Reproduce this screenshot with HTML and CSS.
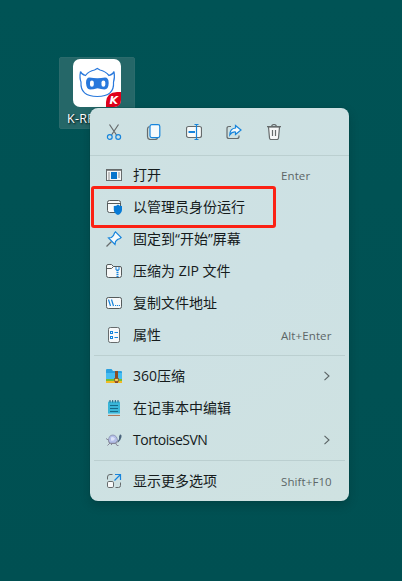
FILE: index.html
```html
<!DOCTYPE html>
<html lang="zh-CN">
<head>
<meta charset="utf-8">
<title>Desktop</title>
<link rel="stylesheet" href="styles.css">
</head>
<body>
<main class="desktop">
  <div class="shortcut">
    <svg class="app-icon" width="48" height="48" viewBox="0 0 48 48">
      <rect width="48" height="48" rx="7" fill="#fff"/>
      <path d="M12.500 16.500Q8.500 15.500 7.500 12.500Q6.300 19 8 23Q7 37.500 24.300 37.500T40.500 23Q42 19 41 12.500Q40 15.500 36 16.500Q32 12 27 11L24.300 9.500L21.500 11Q16 12 12.500 16.500Z" fill="#fff" stroke="#2878dc" stroke-width="1.200"/>
      <path d="M16.500 18.500Q24.500 20 32 18.500Q35.700 18.500 35.700 24Q35.500 30.500 31.500 30.500Q28 30 24.500 29.200Q20 30.500 17 30.500Q13.500 30.500 13 24Q13 18.500 16.500 18.500Z" fill="#2878dc"/>
      <rect x="17" y="21.500" width="3.800" height="6.200" rx="1.900" fill="#fff"/>
      <rect x="28.500" y="21.500" width="3.800" height="6.200" rx="1.900" fill="#fff"/>
      <path d="M48 33V41Q48 48 41 48H33V43Q34 33 44 33Z" fill="#e0001b"/>
      <text class="badge" x="36.500" y="45">K</text>
    </svg>
    <span class="shortcut-label">K-RPA</span>
  </div>

  <div class="menu">
    <div class="toolbar">
      <svg class="tool" viewBox="0 0 16 16"><path d="M3.500 .5L10.500 11M12.500 .5L5.500 11" stroke="#666b6c" stroke-width="1.200"/><circle cx="3.800" cy="13" r="2.400" stroke="#1684dc" stroke-width="1.200"/><circle cx="12.200" cy="13" r="2.400" stroke="#1684dc" stroke-width="1.200"/></svg>
      <svg class="tool" viewBox="0 0 16 16"><path d="M3.500 2.500Q1.500 3 1.500 5V12.500Q1.500 15.500 4.500 15.500H9Q11 15.500 11.500 14" stroke="#666b6c" stroke-width="1.200"/><rect x="4" y=".6" width="9.800" height="13" rx="1.800" fill="#f5fafc" stroke="#1684dc" stroke-width="1.200"/></svg>
      <svg class="tool" viewBox="0 0 16 16"><rect x=".5" y="2.500" width="15" height="11" rx="2" fill="#f7fafa" stroke="#666b6c" stroke-width="1.200"/><path d="M10.500 1V15M8.500 .5H12.500M8.500 15.500H12.500" stroke="#1684dc" stroke-width="1.200"/><path d="M2.500 8H9" stroke="#1684dc" stroke-width="2"/></svg>
      <svg class="tool" viewBox="0 0 16 16"><path d="M5 2.500H3Q1 2.500 1 4.500V12.500Q1 14.500 3 14.500H11Q13 14.500 13 12.500V11.500" stroke="#666b6c" stroke-width="1.200"/><path d="M9.500 1.500L15 6L9.500 10.500V8Q6 7.500 3.800 10.800Q4 4.500 9.500 4Z" fill="#f5fafc" stroke="#1684dc" stroke-width="1.200"/></svg>
      <svg class="tool" viewBox="0 0 16 16"><path d="M2.500 3L3.500 14Q3.700 15.500 5 15.500H11Q12.300 15.500 12.500 14L13.500 3Z" fill="#f7f8f8" stroke="#666b6c" stroke-width="1.200"/><path d="M1 2.700H15M5.500 2.500Q6 .5 8 .5T10.500 2.500M6.500 6V12M9.500 6V12" stroke="#666b6c" stroke-width="1.200"/></svg>
    </div>
    <div class="row">
      <svg class="icon" viewBox="0 0 16 16"><rect x=".5" y="2.500" width="15" height="11" fill="#f5f7f7" stroke="#666b6c"/><path d="M1 3.500H15" stroke="#888"/><rect x="5" y="5" width="6" height="7" fill="#0875cc"/><path d="M2 6H4M2 8H4M2 10H4M2 12H4M12 6H14M12 8H14M12 10H14" stroke="#777" stroke-width=".8"/></svg>
      <span class="label">打开</span><span class="key">Enter</span>
    </div>
    <div class="row">
      <svg class="icon" viewBox="0 0 16 16"><rect x="1.500" y="1.500" width="13" height="12" rx="2" fill="#f8fafa" stroke="#555b5c"/><path d="M1.500 4.500H14.500" stroke="#555b5c"/><path d="M12 5.500Q13.500 7 16 7V11Q15.500 14.500 12 16Q8.300 14.500 7.800 11V7Q10.500 7 12 5.500Z" fill="#087bd6"/></svg>
      <span class="label">以管理员身份运行</span>
    </div>
    <div class="row">
      <svg class="icon" viewBox="0 0 16 16"><path d="M5.500 10.500L.5 15.500" stroke="#666b6c" stroke-width="1.200"/><path d="M9.500 .8L15.200 6.500L14 7.500L11.500 8.500L9.500 10.500L9 13.500L2.500 7L5.500 6.500L7.500 4.500L8.500 2Z" fill="#f5fafc" stroke="#1684dc" stroke-width="1.200"/></svg>
      <span class="label">固定到“开始”屏幕</span>
    </div>
    <div class="row">
      <svg class="icon" viewBox="0 0 16 16"><path d="M.5 12.500V3Q.5 1.500 2 1.500H5.500L7.500 3.500H14Q15.500 3.500 15.500 5V12.500Q15.500 14.500 13.500 14.500H2.500Q.5 14.500 .5 12.500Z" fill="#f7f8f8" stroke="#555b5c"/><path d="M.5 5.500H5.500L7.500 3.500" stroke="#555b5c"/><path d="M11.500 7V14" stroke="#1684dc" stroke-width="2" stroke-dasharray="1.300 .7"/><path d="M10 4V7H13V4" stroke="#1684dc"/></svg>
      <span class="label">压缩为 ZIP 文件</span>
    </div>
    <div class="row">
      <svg class="icon" viewBox="0 0 16 16"><rect x=".5" y="2.500" width="15" height="11" rx="1.800" fill="#f7f9fa" stroke="#555b5c"/><path d="M2.500 4.500L4.500 11M5.500 4.500L7.500 11M9 10.500H10.200M11 10.500H12.200M13 10.500H14" stroke="#1684dc" stroke-width="1.200"/></svg>
      <span class="label">复制文件地址</span>
    </div>
    <div class="row">
      <svg class="icon" viewBox="0 0 16 16"><rect x="2.500" y=".5" width="11" height="15" rx="1.800" fill="#f7f9fa" stroke="#666b6c"/><rect x="4.500" y="4.500" width="2" height="2" stroke="#1684dc"/><rect x="4.500" y="9.500" width="2" height="2" stroke="#1684dc"/><path d="M8.500 5.500H12M8.500 10.500H12" stroke="#1684dc"/></svg>
      <span class="label">属性</span><span class="key">Alt+Enter</span>
    </div>
    <div class="separator"></div>
    <div class="row">
      <svg class="icon" viewBox="0 0 16 16"><path d="M0 2Q0 1 1 1H5.500L7 3H15Q16 3 16 4V12H0Z" fill="#2aa0e0"/><path d="M0 5H16V12H0Z" fill="#45bdf2"/><path d="M0 11H16V13H0Z" fill="#75bd35"/><path d="M0 13H16V15H0Z" fill="#f4bb24"/><path d="M9 3H12V15H9Z" fill="#8c4b24"/><rect x="8.700" y="10.500" width="3.600" height="2.800" fill="#f8dc68" stroke="#8c4b24" stroke-width=".8"/></svg>
      <span class="label">360压缩</span>
      <svg class="chevron" viewBox="0 0 8 10"><path d="M1.500 .8L6 5L1.500 9.200"/></svg>
    </div>
    <div class="row">
      <svg class="icon" viewBox="0 0 16 16"><rect x="2" y="1.500" width="12" height="13.500" rx="1" fill="#39b5d8"/><path d="M2 15.300H14" stroke="#a85e36"/><path d="M2 14.200H14" stroke="#e7f4f7"/><path d="M4 0V2.500M6.700 0V2.500M9.300 0V2.500M12 0V2.500" stroke="#155b79"/><path d="M4 5.500H12M4 8.500H12M4 11.500H12" stroke="#176987"/></svg>
      <span class="label">在记事本中编辑</span>
    </div>
    <div class="row">
      <svg class="icon" viewBox="0 0 16 16"><path d="M2.500 9Q2.500 3 7 3Q11 3.500 11.500 8.500L9 11.200H4.500Z" fill="#b4bfe8" stroke="#858bab" stroke-width=".8"/><path d="M11.500 9Q13.500 8 13 4.500L14 2.500Q16 2 15.500 5Q14.500 9 12 10.500Z" fill="#4a647c"/><path d="M0 6.500L3 8.500M2 9.500L4.500 11.500H9.500L12 9.500M4 11L1.500 13.500M9.500 11L11 13.500H12.500M5.500 11.500V13" stroke="#858699"/><path d="M5 5.500Q7 4 9 6.500Q8 9.500 5 8.500Z" fill="#dce2f8"/></svg>
      <span class="label latin">TortoiseSVN</span>
      <svg class="chevron" viewBox="0 0 8 10"><path d="M1.500 .8L6 5L1.500 9.200"/></svg>
    </div>
    <div class="separator"></div>
    <div class="row">
      <svg class="icon" viewBox="0 0 16 16"><path d="M6.500 1.500H4Q1.500 1.500 1.500 4V6.500M14.500 9.500V12.500Q14.500 14.500 12.500 14.500H9.500" stroke="#666b6c"/><rect x="1.500" y="8.500" width="6" height="6" rx="1.300" fill="#f8fafa" stroke="#666b6c"/><path d="M8.500 7.500L14.500 1.500M9 1.500H14.500V7" stroke="#1684dc" stroke-width="1.200"/></svg>
      <span class="label">显示更多选项</span><span class="key">Shift+F10</span>
    </div>
    <div class="highlight"></div>
  </div>
</main>
</body>
</html>
```
FILE: styles.css
```css
* { box-sizing: border-box; }
body {
  margin: 0;
  font-family: "Open Sans", "Noto Sans CJK SC", sans-serif;
}
.desktop {
  position: relative;
  width: 402px;
  height: 581px;
  overflow: hidden;
  background: linear-gradient(#005355, #005052);
}
.shortcut {
  position: absolute;
  left: 59px;
  top: 57px;
  width: 76px;
  height: 72px;
  padding-top: 1px;
  display: flex;
  flex-direction: column;
  align-items: center;
  background: #256768;
  border: 1px solid #2b6b6c;
  border-radius: 2px;
}
.app-icon { flex: none; }
.badge {
  fill: #fff;
  font: italic 900 11px "DejaVu Sans", sans-serif;
}
.shortcut-label {
  align-self: flex-start;
  margin: 4px 0 0 7px;
  color: #fff;
  font-size: 12.5px;
  line-height: 16px;
  letter-spacing: .3px;
  text-shadow: 1px 1px 2px #000;
}
.menu {
  position: absolute;
  left: 90px;
  top: 108px;
  width: 259px;
  height: 393px;
  background: linear-gradient(150deg, #cee1e2, #cde1e4 50%, #cfe2e1);
  border-radius: 8px;
  box-shadow: 0 0 0 1px #00404140, 0 4px 10px #00202040;
}
.toolbar {
  display: flex;
  align-items: center;
  gap: 24px;
  height: 48px;
  margin-bottom: 3px;
  padding-left: 16px;
  border-bottom: 1px solid #bbcfd0;
}
.tool, .icon { width: 16px; height: 16px; flex: none; fill: none; }
.row {
  display: flex;
  align-items: center;
  height: 32px;
  padding: 0 16px;
}
.label {
  margin-left: 11px;
  color: #151b1c;
  font-size: 14px;
  line-height: 20px;
  white-space: nowrap;
}
.latin { letter-spacing: -.5px; }
.key {
  width: 52px;
  margin-left: auto;
  padding-top: 2px;
  color: #5c6667;
  font-size: 11.5px;
  line-height: 16px;
  letter-spacing: .1px;
  white-space: nowrap;
}
.chevron {
  width: 8px;
  height: 10px;
  margin-left: auto;
  margin-right: 2px;
  fill: none;
  stroke: #5a6364;
  stroke-width: 1.1;
}
.separator {
  height: 1px;
  margin: 4px;
  background: #bbcfd0;
}
.highlight {
  position: absolute;
  left: 1px;
  top: 78px;
  width: 185px;
  height: 42px;
  border: 3px solid #fb2114;
  border-radius: 3px;
}
```
